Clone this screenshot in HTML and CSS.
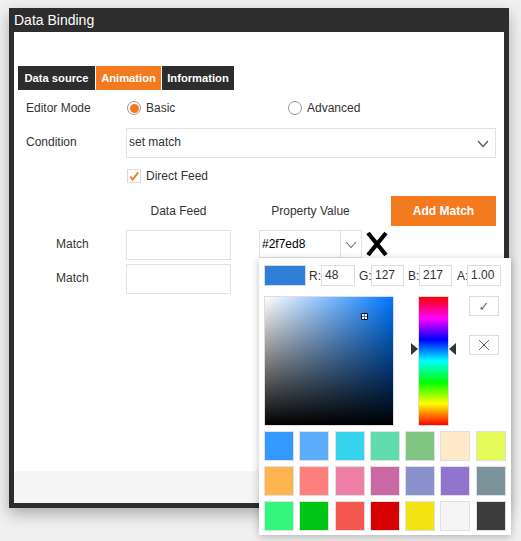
FILE: index.html
```html
<!DOCTYPE html>
<html>
<head>
<meta charset="utf-8">
<link rel="stylesheet" href="styles.css">
</head>
<body>
<div class="dialog">
  <div class="title">Data Binding</div>
  <div class="content">
    <div class="tabs">
      <div class="tab t1">Data source</div>
      <div class="tab t2 active">Animation</div>
      <div class="tab t3">Information</div>
    </div>
    <div class="row mode">
      <div class="label">Editor Mode</div>
      <div class="radio on"><span class="circle"><span class="dot"></span></span>Basic</div>
      <div class="radio"><span class="circle"></span>Advanced</div>
    </div>
    <div class="row cond">
      <div class="label">Condition</div>
      <div class="select">set match
        <svg class="chev" width="12" height="8" viewBox="0 0 12 8"><polyline points="1,1 6,6.5 11,1" fill="none" stroke="#555" stroke-width="1.2"/></svg>
      </div>
    </div>
    <div class="row check">
      <div class="label"></div>
      <div class="checkbox"><svg width="13" height="13" viewBox="0 0 13 13"><polyline points="2.5,6.5 5,10 11,2" fill="none" stroke="#f37a1f" stroke-width="2"/></svg></div>
      <span class="cbtext">Direct Feed</span>
    </div>
    <div class="row head">
      <div class="label"></div>
      <div class="col1">Data Feed</div>
      <div class="col2">Property Value</div>
      <div class="btn">Add Match</div>
    </div>
    <div class="row match">
      <div class="label mlabel">Match</div>
      <div class="input"></div>
      <div class="colorinput">
        <span class="ctext">#2f7ed8</span>
        <span class="cdrop"><svg width="12" height="8" viewBox="0 0 12 8"><polyline points="1,1 6,6.5 11,1" fill="none" stroke="#666" stroke-width="1.1"/></svg></span>
      </div>
      <svg class="bigx" width="22" height="26" viewBox="0 0 22 26"><path d="M2 2 L20 24 M20 2 L2 24" stroke="#000" stroke-width="4.2"/></svg>
    </div>
    <div class="row match m2">
      <div class="label mlabel">Match</div>
      <div class="input"></div>
    </div>
  </div>
  <div class="footer"></div>
</div>

<div class="picker">
  <div class="prow">
    <div class="preview"></div>
    <span class="pl lr">R:</span><div class="pin w34">48</div>
    <span class="pl lg">G:</span><div class="pin w33">127</div>
    <span class="pl lb">B:</span><div class="pin w33">217</div>
    <span class="pl la">A:</span><div class="pin w34">1.00</div>
  </div>
  <div class="pmid">
    <div class="sv"><span class="marker"></span></div>
    <div class="huewrap">
      <span class="arr left"></span>
      <div class="hue"></div>
      <span class="arr right"></span>
    </div>
    <div class="pbtns">
      <div class="pbtn">&#10003;</div>
      <div class="pbtn x"><svg width="12" height="12" viewBox="0 0 12 12"><path d="M1 1 L11 11 M11 1 L1 11" stroke="#666" stroke-width="1"/></svg></div>
    </div>
  </div>
  <div class="swatches">
    <span class="sw" style="background:#3399ff"></span>
    <span class="sw" style="background:#5caefd"></span>
    <span class="sw" style="background:#35d3ec"></span>
    <span class="sw" style="background:#5fdbae"></span>
    <span class="sw" style="background:#80c582"></span>
    <span class="sw" style="background:#ffe9c8"></span>
    <span class="sw" style="background:#e3fa59"></span>
    <span class="sw" style="background:#ffb54f"></span>
    <span class="sw" style="background:#ff7f7f"></span>
    <span class="sw" style="background:#ef7fa6"></span>
    <span class="sw" style="background:#cb69a5"></span>
    <span class="sw" style="background:#8990cb"></span>
    <span class="sw" style="background:#9074cd"></span>
    <span class="sw" style="background:#7c939c"></span>
    <span class="sw" style="background:#33f67c"></span>
    <span class="sw" style="background:#00c514"></span>
    <span class="sw" style="background:#f4574d"></span>
    <span class="sw" style="background:#d60000"></span>
    <span class="sw" style="background:#f2e313"></span>
    <span class="sw" style="background:#f5f5f5"></span>
    <span class="sw" style="background:#3c3c3c"></span>
  </div>
</div>
</body>
</html>
```

FILE: styles.css
```css
* { box-sizing: border-box; }
html, body { margin: 0; padding: 0; }
body {
  background: #f0f0f0;
  font-family: "Liberation Sans", Arial, sans-serif;
  font-size: 12px;
  color: #333;
  width: 521px;
  height: 541px;
  padding: 8px 0 0 9px;
  position: relative;
  overflow: hidden;
}
.dialog {
  width: 500px;
  height: 500px;
  background: #2d2d2d;
  padding: 0 5px 5px 5px;
  box-shadow: 0 6px 14px rgba(0,0,0,0.28);
  display: flex;
  flex-direction: column;
}
.title {
  height: 24px;
  line-height: 25px;
  color: #fff;
  font-size: 14px;
}
.content {
  height: 439px;
  background: #fff;
  padding-top: 34px;
}
.footer {
  height: 32px;
  background: #f5f5f5;
}
.tabs {
  display: flex;
  margin-left: 4px;
  gap: 1px;
  height: 24px;
}
.tab {
  background: #2d2d2d;
  color: #fff;
  font-weight: bold;
  font-size: 11.2px;
  line-height: 24px;
  text-align: center;
}
.tab.active { background: #f37a1f; }
.t1 { width: 77px; }
.t2 { width: 65px; }
.t3 { width: 72px; }

.row {
  display: flex;
  align-items: center;
  padding-left: 12px;
}
.label { width: 100px; flex: none; }
.mode { margin-top: 8px; height: 20px; }
.radio {
  display: flex;
  align-items: center;
  width: 161px;
}
.circle {
  width: 14px;
  height: 14px;
  border: 1px solid #999;
  border-radius: 50%;
  margin-left: 1px;
  margin-right: 5px;
  display: flex;
  align-items: center;
  justify-content: center;
}
.dot {
  width: 9px;
  height: 9px;
  border-radius: 50%;
  background: #f37a1f;
}
.cond { margin-top: 10px; height: 30px; }
.cond .label { margin-top: -2px; }
.select {
  width: 370px;
  height: 30px;
  border: 1px solid #e2e2e2;
  padding-left: 2px;
  line-height: 27px;
  position: relative;
}
.chev { position: absolute; right: 6px; top: 11px; }
.check { margin-top: 8px; height: 20px; }
.checkbox {
  width: 14px;
  height: 14px;
  border: 1px solid #ddd;
  margin-left: 1px;
  margin-right: 5px;
  display: flex;
  align-items: center;
  justify-content: center;
}
.head { margin-top: 10px; height: 30px; }
.col1 { width: 105px; text-align: center; }
.col2 { width: 103px; margin-left: 28px; text-align: center; }
.btn {
  margin-left: 29px;
  width: 105px;
  height: 30px;
  background: #f37a1f;
  color: #fff;
  font-weight: bold;
  line-height: 30px;
  text-align: center;
}
.match { margin-top: 4px; height: 30px; align-items: flex-start; }
.mlabel { padding-left: 30px; line-height: 29px; }
.input {
  width: 105px;
  height: 30px;
  border: 1px solid #e2e2e2;
}
.colorinput {
  margin-left: 28px;
  width: 103px;
  height: 28px;
  border: 1px solid #e2e2e2;
  display: flex;
  align-items: center;
  color: #000;
}
.ctext { flex: 1; padding-left: 2px; }
.cdrop {
  width: 21px;
  height: 26px;
  border-left: 1px solid #e2e2e2;
  display: flex;
  align-items: center;
  justify-content: center;
  padding-top: 2px;
}
.bigx { margin-left: 4px; margin-top: 1px; }

.picker {
  position: absolute;
  left: 259px;
  top: 258px;
  width: 252px;
  height: 277px;
  background: #fff;
  box-shadow: 0 2px 8px rgba(0,0,0,0.25);
  padding: 7px 5px 5px 5px;
}
.prow {
  display: flex;
  align-items: center;
  height: 21px;
}
.preview {
  width: 42px;
  height: 21px;
  background: #2f7ed8;
  border: 1px solid #d8d8d8;
  margin-right: 3px;
}
.pl { font-size: 12px; color: #333; }
.lr { width: 12px; }
.lg { width: 12px; margin-left: 4px; }
.lb { width: 11px; margin-left: 4px; }
.la { width: 10px; margin-left: 5px; }
.pin {
  height: 21px;
  border: 1px solid #ddd;
  padding-left: 3px;
  line-height: 19px;
  font-size: 12px;
  color: #333;
}
.w34 { width: 34px; }
.w33 { width: 33px; }
.pmid {
  display: flex;
  margin-top: 10px;
  height: 130px;
}
.sv {
  width: 130px;
  height: 130px;
  border: 1px solid #ddd;
  position: relative;
  background:
    linear-gradient(to top, #000, rgba(0,0,0,0)),
    linear-gradient(to right, #fff, hsl(212, 100%, 50%));
}
.marker {
  position: absolute;
  left: 96px;
  top: 16px;
  width: 7px;
  height: 7px;
  border: 1px solid #000;
  background: #fff;
  border-radius: 1px;
}
.marker::before, .marker::after {
  content: "";
  position: absolute;
  background: #2f7ed8;
}
.marker::before { left: 2px; top: 0; width: 1px; height: 5px; }
.marker::after { left: 0; top: 2px; width: 5px; height: 1px; }
.huewrap {
  position: relative;
  margin-left: 24px;
  width: 31px;
  height: 130px;
}
.hue {
  width: 31px;
  height: 130px;
  border: 1px solid #ddd;
  background: linear-gradient(to bottom,
    #ff0000 0%, #ff00ff 16.67%, #0000ff 33.33%, #00ffff 50%,
    #00ff00 66.67%, #ffff00 83.33%, #ff0000 100%);
}
.arr {
  position: absolute;
  top: 47px;
  width: 0;
  height: 0;
  border-top: 6px solid transparent;
  border-bottom: 6px solid transparent;
}
.arr.left { left: -7px; border-left: 7px solid #333; }
.arr.right { right: -7px; border-right: 7px solid #333; }
.pbtns {
  margin-left: 20px;
  display: flex;
  flex-direction: column;
  gap: 19px;
}
.pbtn {
  width: 30px;
  height: 20px;
  border: 1px solid #ddd;
  display: flex;
  align-items: center;
  justify-content: center;
  color: #666;
  font-size: 13px;
  font-family: "DejaVu Sans", sans-serif;
}
.swatches {
  margin-top: 5px;
  display: grid;
  grid-template-columns: repeat(7, 30px);
  grid-auto-rows: 30px;
  column-gap: 5.3px;
  row-gap: 5px;
}
.sw {
  border: 1px solid #e0e0e0;
}
```
